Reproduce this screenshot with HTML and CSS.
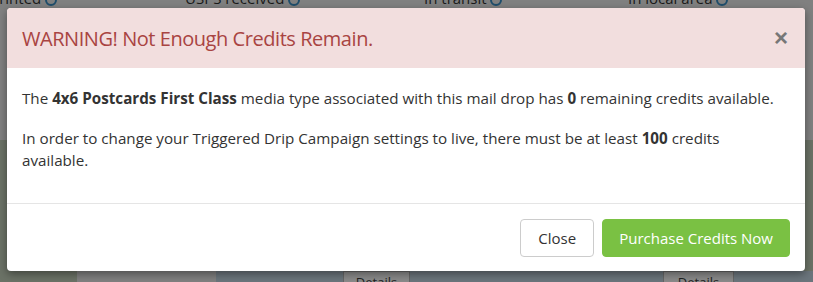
FILE: index.html
```html
<!DOCTYPE html>
<html lang="en">
<head>
    <meta charset="UTF-8">
    <title>Not Enough Credits</title>
    <link rel="stylesheet" href="styles.css">
</head>
<body>
    <div class="page">
        <div class="status-row">
            <span class="status s1">printed <i class="dot"></i></span>
            <span class="status s2">USPS received <i class="dot"></i></span>
            <span class="status s3">In transit <i class="dot"></i></span>
            <span class="status s4">In local area <i class="dot"></i></span>
        </div>
        <div class="middle"></div>
        <div class="table-row">
            <div class="cell c1"></div>
            <div class="cell c2"></div>
            <div class="cell c3"></div>
            <div class="cell btn-cell">Details</div>
            <div class="cell c4"></div>
            <div class="cell btn-cell wide">Details</div>
            <div class="cell c5"></div>
        </div>
    </div>

    <div class="modal">
        <div class="modal-header">
            <h4 class="modal-title">WARNING! Not Enough Credits Remain.</h4>
            <button type="button" class="close">&times;</button>
        </div>
        <div class="modal-body">
            <p>The <b>4x6 Postcards First Class</b> media type associated with this mail drop has <b>0</b> remaining credits available.</p>
            <p>In order to change your Triggered Drip Campaign settings to live, there must be at least <b>100</b> credits available.</p>
        </div>
        <div class="modal-footer">
            <button type="button" class="btn btn-default">Close</button>
            <button type="button" class="btn btn-success">Purchase Credits Now</button>
        </div>
    </div>
</body>
</html>
```

FILE: styles.css
```css
* {
    box-sizing: border-box;
}

body {
    margin: 0;
    font-family: "Open Sans", Arial, sans-serif;
    background-color: #808080;
    width: 813px;
    height: 282px;
    overflow: hidden;
}

.page {
    display: flex;
    flex-direction: column;
    height: 282px;
}

.status-row {
    height: 8px;
    position: relative;
    overflow: hidden;
    font-size: 15px;
    color: #1a1a1a;
}

.status {
    position: absolute;
    top: -12px;
    white-space: nowrap;
}

.s1 { left: -10px; }
.s2 { left: 185px; }
.s3 { left: 424px; }
.s4 { left: 628px; }

.dot {
    display: inline-block;
    width: 12px;
    height: 12px;
    border-radius: 50%;
    border: 2px solid #1f4d6b;
    vertical-align: middle;
}

.middle {
    flex: 1;
    background: linear-gradient(#808080 0, #808080 132px, #6b7266 132px);
}

.table-row {
    height: 11px;
    display: flex;
    font-size: 13px;
    color: #222;
}

.cell {
    height: 100%;
}

.c1 { width: 77px; background-color: #6b7266; }
.c2 { width: 139px; background-color: #808080; }
.c3 { width: 127px; background-color: #6b757c; }
.c4 { width: 253px; background-color: #6b757c; }
.c5 { flex: 1; background-color: #6b757c; }

.btn-cell {
    width: 67px;
    background-color: #8a8a8a;
    border: 1px solid #666;
    border-bottom: none;
    text-align: center;
    line-height: 20px;
    overflow: hidden;
}

.btn-cell.wide {
    width: 71px;
}

.modal {
    position: absolute;
    left: 7px;
    top: 8px;
    width: 798px;
    height: 263px;
    background-color: #fff;
    border-radius: 4px;
    box-shadow: 0 3px 9px rgba(0, 0, 0, 0.4);
    overflow: hidden;
    display: flex;
    flex-direction: column;
}

.modal-header {
    background-color: #f2dede;
    color: #a94442;
    height: 60px;
    padding: 0 15px;
    display: flex;
    align-items: center;
    justify-content: space-between;
}

.modal-title {
    margin: 0;
    font-size: 20px;
    font-weight: normal;
    letter-spacing: -0.45px;
}

.close {
    background: none;
    border: none;
    font-size: 24px;
    font-weight: bold;
    color: #777;
    padding: 0;
    margin-right: 2px;
    font-family: Arial, sans-serif;
    cursor: pointer;
}

.modal-body {
    padding: 19px 29px 10px 15px;
    font-size: 15.2px;
    color: #333;
    line-height: 22px;
}

.modal-body p {
    margin: 0 0 18px;
}

.modal-footer {
    border-top: 1px solid #e5e5e5;
    margin-top: auto;
    height: 68px;
    padding: 15px 15px 0;
    display: flex;
    justify-content: flex-end;
    gap: 8px;
}

.btn {
    font-family: "Open Sans", Arial, sans-serif;
    font-size: 15px;
    height: 38px;
    padding: 0 16px;
    border-radius: 4px;
    cursor: pointer;
}

.btn-default {
    background-color: #fff;
    border: 1px solid #ccc;
    color: #333;
    padding: 0 17px;
}

.btn-success {
    background-color: #7ac143;
    border: 1px solid #7ac143;
    color: #fff;
}
```
